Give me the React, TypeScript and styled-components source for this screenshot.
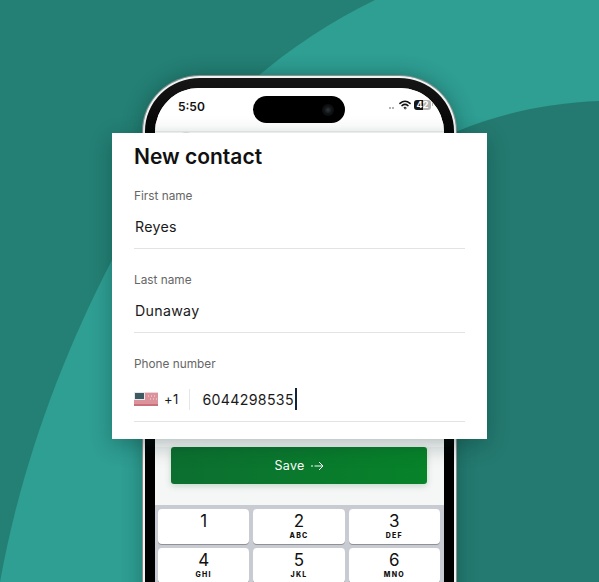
import React from 'react';
import styled, { createGlobalStyle } from 'styled-components';

const GlobalStyle = createGlobalStyle`
  html, body {
    margin: 0;
    padding: 0;
    background: #247f74;
  }
  body {
    font-family: Inter, "Liberation Sans", sans-serif;
  }
`;

const Stage = styled.div`
  position: relative;
  width: 599px;
  height: 582px;
  overflow: hidden;
  display: flex;
  justify-content: center;
  align-items: flex-start;
  background: #247f74;
`;

const Backdrop = styled.svg`
  position: absolute;
  inset: 0;
`;

const Phone = styled.div`
  position: relative;
  flex: none;
  width: 313px;
  height: 620px;
  margin-top: 76px;
  box-sizing: border-box;
  padding: 10px;
  background: linear-gradient(180deg, #161616, #000 70px);
  border: 2px solid #f1f2f2;
  border-radius: 57px 57px 0 0 / 55px 55px 0 0;
  box-shadow: 0 0 0 1px #8b908f, 0 0 20px rgba(8, 50, 44, 0.45);
`;

const Screen = styled.div`
  display: flex;
  flex-direction: column;
  height: 100%;
  background: #f5f6f6;
  border-radius: 44px 44px 0 0;
  overflow: hidden;
`;

const StatusBar = styled.div`
  display: grid;
  grid-template-columns: 98px 92px 1fr;
  height: 43px;
  box-sizing: border-box;
  padding-top: 8px;
  background: #fff;
`;

const Time = styled.span`
  padding: 3px 0 0 23px;
  font-size: 12px;
  font-weight: 600;
  line-height: 15px;
  color: #111;
`;

const Island = styled.div`
  display: flex;
  align-items: center;
  justify-content: flex-end;
  height: 27px;
  padding-right: 11px;
  background: #000;
  border-radius: 14px;
`;

const Camera = styled.span`
  width: 12px;
  height: 12px;
  border-radius: 50%;
  background: radial-gradient(circle, #2a2f33 10%, #101214 45%, #060606 100%);
`;

const StatusIcons = styled.div`
  display: flex;
  align-items: flex-start;
  justify-content: flex-end;
  gap: 3px;
  padding: 4px 11px 0 0;
`;

const SignalDots = styled.span`
  display: flex;
  gap: 1px;
  margin: 7px 2px 0 0;

  i {
    width: 2px;
    height: 2px;
    border-radius: 50%;
    background: #9a9a9a;
  }
`;

const Battery = styled.span`
  width: 17px;
  height: 10px;
  border-radius: 3px;
  overflow: hidden;
  background: linear-gradient(90deg, #161616 52%, #b5b5b5 52%);
  font-size: 9px;
  font-weight: 700;
  line-height: 10px;
  text-align: center;
  color: #fff;
`;

const BatteryTip = styled.span`
  width: 1px;
  height: 3px;
  margin: 3px 0 0 -2px;
  background: #b5b5b5;
`;

const TopBar = styled.div`
  height: 316px;
  box-sizing: border-box;
  padding-left: 22px;
  background: #fff;
  border-top: 1px solid #eeeeee;
`;

const BackCircle = styled.div`
  width: 16px;
  height: 16px;
  border: 1px solid #e4e4e4;
  border-radius: 50%;
`;

const SaveRow = styled.div`
  padding: 0 17px 21px 16px;
`;

const SaveButton = styled.button`
  display: flex;
  align-items: center;
  justify-content: center;
  gap: 6px;
  width: 100%;
  height: 37px;
  padding: 0;
  border: 0;
  border-radius: 3px;
  background: linear-gradient(90deg, #0c6f30, #07832a);
  box-shadow: 0 2px 6px rgba(7, 110, 40, 0.22);
  font-family: inherit;
  font-size: 12.5px;
  font-weight: 400;
  letter-spacing: 0.3px;
  color: #fff;
`;

const Keyboard = styled.div`
  display: grid;
  grid-template-columns: repeat(3, 1fr);
  grid-auto-rows: 35px;
  gap: 4px;
  flex: 1;
  padding: 4px 4px 4px 3px;
  background: #c8cbd2;
`;

const Key = styled.div`
  display: flex;
  flex-direction: column;
  align-items: center;
  background: #fff;
  border-radius: 4px;
  box-shadow: 0 1px 0 #8f9196;
`;

const Digit = styled.span`
  margin-top: 3px;
  font-size: 17px;
  line-height: 19px;
  color: #111;
`;

const Letters = styled.span`
  font-size: 7px;
  font-weight: 800;
  line-height: 9px;
  letter-spacing: 1.2px;
  color: #111;
`;

const Card = styled.section`
  position: absolute;
  left: 112px;
  top: 133px;
  width: 375px;
  height: 306px;
  box-sizing: border-box;
  padding: 12px 22px 0;
  background: #fff;
  box-shadow: 0 6px 20px rgba(6, 40, 36, 0.32);
`;

const Title = styled.h1`
  margin: 0 0 19px;
  font-size: 21px;
  font-weight: 600;
  line-height: 24px;
  color: #111;
`;

const Field = styled.div`
  margin-bottom: 23px;
  border-bottom: 1px solid #e3e3e3;
`;

const Label = styled.div`
  font-size: 11.8px;
  line-height: 16px;
  color: #666;
`;

const Value = styled.div`
  padding: 14px 0 12px 1px;
  font-size: 14.2px;
  line-height: 18px;
  letter-spacing: 0.3px;
  color: #1a1a1a;
`;

const PhoneValue = styled.div`
  display: flex;
  align-items: center;
  height: 49px;
  box-sizing: border-box;
  padding-top: 5px;
  font-size: 14.2px;
  letter-spacing: 0.3px;
  color: #1a1a1a;
`;

const Dial = styled.span`
  margin-left: 6px;
  font-size: 13px;
`;

const Divider = styled.span`
  width: 1px;
  height: 21px;
  margin: 0 13px 0 10px;
  background: #e6e6e6;
`;

const Caret = styled.span`
  width: 2px;
  height: 22px;
  margin-left: 1px;
  background: #13233a;
`;

const FlagIcon = () => (
  <svg width="24" height="14" viewBox="0 0 24 14">
    <rect width="24" height="14" fill="#dc929b" />
    <rect y="0" width="24" height="1" fill="#efd5d8" />
    <rect y="12" width="24" height="2" fill="#c8707b" />
    <rect width="11" height="8" fill="#e6e9ea" />
    <rect x="1" y="1" width="9" height="6" fill="#3f5963" />
    <path d="M14 4h1M17 4h1M20 4h1M16 7h1M19 7h1M22 7h1" stroke="#f2dfe1" strokeWidth="1" />
  </svg>
);

const WifiIcon = () => (
  <svg width="12" height="10" viewBox="0 0 12 10" fill="none" stroke="#111" strokeLinecap="round">
    <path d="M1 3.4C4 .8 8 .8 11 3.4" strokeWidth="1.6" />
    <path d="M3 5.6c1.8-1.5 4.2-1.5 6 0" strokeWidth="1.5" />
    <path d="M6 9 4.8 7.6c.7-.5 1.7-.5 2.4 0Z" fill="#111" strokeWidth="0.6" />
  </svg>
);

const ArrowIcon = () => (
  <svg width="13" height="10" viewBox="0 0 13 10" fill="none" stroke="#fff" strokeWidth="1">
    <path d="M0 5h2M3.5 5H12" />
    <path d="M8 1l4 4-4 4" />
  </svg>
);

const keys = [
  ['1', ''],
  ['2', 'ABC'],
  ['3', 'DEF'],
  ['4', 'GHI'],
  ['5', 'JKL'],
  ['6', 'MNO'],
];

export default function App() {
  return (
    <Stage>
      <GlobalStyle />
      <Backdrop width="599" height="582" viewBox="0 0 599 582">
        <path d="M375 0C260 55 170 150 112 260C60 360 20 470 0 582H599V0Z" fill="#2f9e93" />
        <path d="M599 101C550 103 500 113 458 131C400 160 340 300 320 582H599Z" fill="#247a70" />
      </Backdrop>
      <Phone>
        <Screen>
          <StatusBar>
            <Time>5:50</Time>
            <Island>
              <Camera />
            </Island>
            <StatusIcons>
              <SignalDots>
                <i />
                <i />
              </SignalDots>
              <WifiIcon />
              <Battery>42</Battery>
              <BatteryTip />
            </StatusIcons>
          </StatusBar>
          <TopBar>
            <BackCircle />
          </TopBar>
          <SaveRow>
            <SaveButton>
              Save
              <ArrowIcon />
            </SaveButton>
          </SaveRow>
          <Keyboard>
            {keys.map(([digit, letters]) => (
              <Key key={digit}>
                <Digit>{digit}</Digit>
                <Letters>{letters}</Letters>
              </Key>
            ))}
          </Keyboard>
        </Screen>
      </Phone>
      <Card>
        <Title>New contact</Title>
        <Field>
          <Label>First name</Label>
          <Value>Reyes</Value>
        </Field>
        <Field>
          <Label>Last name</Label>
          <Value>Dunaway</Value>
        </Field>
        <Field>
          <Label>Phone number</Label>
          <PhoneValue>
            <FlagIcon />
            <Dial>+1</Dial>
            <Divider />
            6044298535
            <Caret />
          </PhoneValue>
        </Field>
      </Card>
    </Stage>
  );
}
